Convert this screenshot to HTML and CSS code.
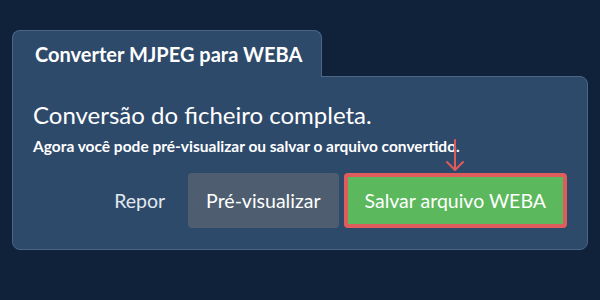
FILE: index.html
```html
<!DOCTYPE html>
<html lang="pt">
<head>
  <meta charset="UTF-8" />
  <meta name="viewport" content="width=device-width, initial-scale=1.0" />
  <title>Converter MJPEG para WEBA</title>
  <link rel="stylesheet" href="styles.css">
</head>
<body>
  <div class="converter">
    <div class="tab">Converter MJPEG para WEBA</div>
    <div class="panel">
      <h2 class="panel-title">Conversão do ficheiro completa.</h2>
      <p class="panel-text">Agora você pode pré-visualizar ou salvar o arquivo convertido.</p>
      <div class="actions">
        <button class="btn btn-link">Repor</button>
        <button class="btn btn-preview">Pré-visualizar</button>
        <button class="btn btn-save">
          Salvar arquivo WEBA
          <svg class="hint-arrow" width="20" height="34" viewBox="0 0 20 34">
            <path d="M10 1 V31 M2 23 L10 31 L18 23" fill="none" stroke="#e05a5a" stroke-width="2" stroke-linecap="round" stroke-linejoin="round"/>
          </svg>
        </button>
      </div>
    </div>
  </div>
</body>
</html>
```

FILE: styles.css
```css
/* Basic Reset */
* {
  margin: 0;
  padding: 0;
  box-sizing: border-box;
}

body {
  background: #10223a;
  font-family: Lato, "Open Sans", sans-serif;
  color: #fff;
  padding: 30px 12px;
}

/* Tab */
.converter {
  display: flex;
  flex-direction: column;
  align-items: flex-start;
}
.tab {
  position: relative;
  z-index: 1;
  margin-bottom: -1px;
  padding: 13px 22px 13px 22px;
  width: 310px;
  background: #2e4a6b;
  border: 1px solid #4b6686;
  border-bottom: none;
  border-radius: 8px 8px 0 0;
  font-size: 20px;
  font-weight: bold;
  line-height: 20px;
  white-space: nowrap;
}

/* Panel */
.panel {
  align-self: stretch;
  background: #2e4a6b;
  border: 1px solid #4b6686;
  border-radius: 0 8px 8px 8px;
  padding: 23px 20px 21px 20px;
}
.panel-title {
  font-size: 24px;
  font-weight: normal;
  line-height: 30px;
}
.panel-text {
  font-size: 15.5px;
  font-weight: bold;
  line-height: 18px;
  margin-top: 7px;
}

/* Buttons */
.actions {
  display: flex;
  justify-content: flex-end;
  gap: 5px;
  margin-top: 18px;
}
.btn {
  position: relative;
  height: 55px;
  padding: 0 18px;
  border: none;
  border-radius: 4px;
  font-family: inherit;
  font-size: 19.5px;
  color: #fff;
  background: none;
  cursor: pointer;
}
.btn-link {
  color: #e3e8ee;
}
.btn-preview {
  background: #4e5e70;
}
.btn-save {
  background: #5cb85c;
  border: 4px solid #df5c5c;
  padding: 0 17px;
}
.hint-arrow {
  position: absolute;
  top: -38px;
  left: 50%;
  transform: translateX(-50%);
}
```
